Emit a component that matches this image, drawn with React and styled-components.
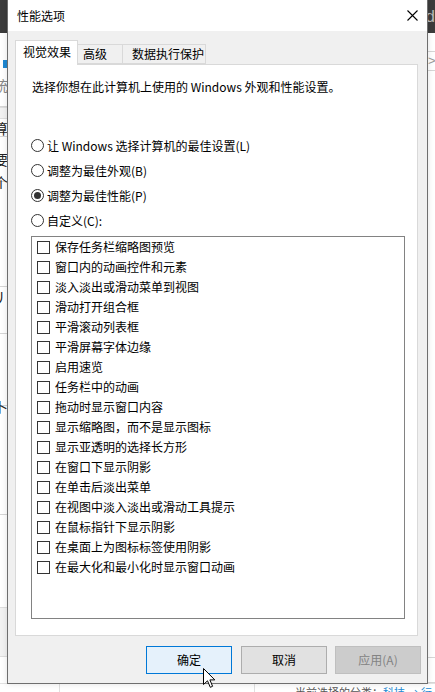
import React from "react";
import styled, { createGlobalStyle } from "styled-components";

const GlobalStyle = createGlobalStyle`
  html, body { margin: 0; padding: 0; background: #ffffff; }
  body {
    font-family: "Noto Sans CJK SC", "Noto Sans", "Liberation Sans", sans-serif;
    font-size: 12px;
    color: #000;
  }
  * { box-sizing: border-box; }
`;

const Page = styled.div`
  position: relative;
  width: 435px;
  height: 692px;
  overflow: hidden;
  background: #fff;
`;

/* ---------- background page (mostly hidden behind the dialog) ---------- */
const Backdrop = styled.div`
  display: flex;
  flex-direction: column;
  width: 435px;
  height: 692px;
`;

const TopBar = styled.div`
  flex: none;
  height: 33px;
  background: #3c3c3c;
  display: flex;
  justify-content: flex-end;
  align-items: center;
  color: #b8b8b8;
  font-size: 17px;
  line-height: 20px;
  font-family: "Liberation Sans", sans-serif;
`;

const Middle = styled.div`
  flex: 1;
  display: flex;
  justify-content: space-between;
`;

const SideFrag = styled.div`
  width: 8px;
  display: flex;
  flex-direction: column;
  overflow: hidden;
`;

const BlueMark = styled.div`
  flex: none;
  margin-top: 27px;
  margin-left: 3px;
  width: 5px;
  height: 8px;
  background: #1e88d2;
`;

const FragText = styled.div`
  flex: none;
  margin-top: ${(p) => p.$mt || 0}px;
  margin-left: -6px;
  height: ${(p) => p.$h || 16}px;
  line-height: ${(p) => p.$h || 16}px;
  font-size: 14px;
  color: ${(p) => p.$c || "#222"};
  white-space: nowrap;
  background: ${(p) => p.$bg || "transparent"};
`;

const FragLine = styled.div`
  flex: none;
  margin-top: ${(p) => p.$mt || 0}px;
  height: 1px;
  background: #d6d6d6;
`;

const FragBand = styled.div`
  flex: none;
  margin-top: ${(p) => p.$mt || 0}px;
  height: ${(p) => p.$h}px;
  background: #f2f2f2;
  border-top: 1px solid #dedede;
  border-bottom: 1px solid #dedede;
`;

const Chevron = styled.div`
  flex: none;
  margin-top: 2px;
  height: 14px;
  line-height: 14px;
  font-size: 13px;
  color: #9a9a9a;
  padding-left: 1px;
  font-family: "Liberation Sans", sans-serif;
`;

const BottomBar = styled.div`
  flex: none;
  height: 16px;
  display: flex;
  align-items: flex-end;
  border-top: 1px solid #e2e2e2;
`;

const BottomCell = styled.div`
  flex: none;
  width: ${(p) => p.$w}px;
  height: 100%;
  border-right: 1px solid #e0e0e0;
`;

const BottomText = styled.div`
  flex: none;
  padding-left: 40px;
  font-size: 11px;
  line-height: 14px;
  color: #555;
  white-space: nowrap;
  span { color: #1a8ad4; }
`;

/* ---------- dialog ---------- */
const Dialog = styled.div`
  position: absolute;
  left: 7px;
  top: -1px;
  width: 421px;
  height: 685px;
  border: 1px solid #6e6e6e;
  background: #f0f0f0;
  display: flex;
  flex-direction: column;
  box-shadow: 0 0 6px rgba(0, 0, 0, 0.12);
`;

const TitleBar = styled.div`
  height: 31px;
  background: #fff;
  display: flex;
  align-items: center;
  justify-content: space-between;
  padding: 0 9px 0 9px;
`;

const Title = styled.div`
  font-size: 12px;
  line-height: 16px;
`;

const CloseBtn = styled.div`
  width: 12px;
  height: 12px;
  display: flex;
  align-items: center;
  justify-content: center;
`;

const Body = styled.div`
  padding: 9px 9px 0 7px;
  display: flex;
  flex-direction: column;
`;

const TabStrip = styled.div`
  height: 24px;
  display: flex;
  align-items: flex-end;
`;

const Tab = styled.div`
  position: relative;
  z-index: ${(p) => (p.$active ? 2 : 1)};
  width: ${(p) => p.$w}px;
  height: ${(p) => (p.$active ? 25 : 20)}px;
  margin-bottom: ${(p) => (p.$active ? -1 : 0)}px;
  margin-left: ${(p) => (p.$first ? 0 : -1)}px;
  background: ${(p) => (p.$active ? "#fff" : "#f0f0f0")};
  border: 1px solid #d9d9d9;
  border-bottom: ${(p) => (p.$active ? "none" : "1px solid #d9d9d9")};
  padding-left: ${(p) => p.$pl}px;
  padding-top: ${(p) => (p.$active ? 3 : 1)}px;
  line-height: 16px;
  font-size: 12px;
  white-space: nowrap;
`;

const Panel = styled.div`
  position: relative;
  z-index: 1;
  height: 572px;
  background: #fff;
  border: 1px solid #d9d9d9;
  padding: 14px 12px 0 16px;
  display: flex;
  flex-direction: column;
`;

const Desc = styled.div`
  line-height: 16px;
  white-space: nowrap;
`;

const RadioGroup = styled.div`
  margin-top: 38px;
  margin-left: -1px;
  display: flex;
  flex-direction: column;
`;

const RadioRow = styled.div`
  height: 25px;
  display: flex;
  align-items: center;
  gap: 3px;
  white-space: nowrap;
`;

const RadioCircle = styled.span`
  width: 13px;
  height: 13px;
  border-radius: 50%;
  border: 1px solid #333;
  background: #fff;
  display: flex;
  align-items: center;
  justify-content: center;
  flex: none;
  &::after {
    content: "";
    display: ${(p) => (p.$checked ? "block" : "none")};
    width: 7px;
    height: 7px;
    border-radius: 50%;
    background: #333;
  }
`;

const Label = styled.span`
  line-height: 16px;
`;

const ListBox = styled.div`
  margin-top: 3px;
  margin-left: -1px;
  height: 383px;
  border: 1px solid #828282;
  background: #fff;
  padding: 0 0 0 5px;
  display: flex;
  flex-direction: column;
`;

const CheckRow = styled.div`
  height: 20px;
  display: flex;
  align-items: center;
  gap: 5px;
  white-space: nowrap;
`;

const CheckBox = styled.span`
  width: 13px;
  height: 13px;
  border: 1px solid #333;
  background: #fff;
  flex: none;
`;

const Footer = styled.div`
  margin-top: 10px;
  margin-right: -3px;
  display: flex;
  justify-content: flex-end;
  gap: 9px;
`;

const Button = styled.div`
  width: 86px;
  height: 28px;
  display: flex;
  align-items: center;
  justify-content: center;
  font-size: 12px;
  line-height: 16px;
  border: 1px solid
    ${(p) =>
      p.$variant === "primary" ? "#0078d7" : p.$variant === "disabled" ? "#bfbfbf" : "#adadad"};
  background: ${(p) =>
    p.$variant === "primary" ? "#e5f1fb" : p.$variant === "disabled" ? "#cccccc" : "#e1e1e1"};
  color: ${(p) => (p.$variant === "disabled" ? "#838383" : "#000")};
  margin-left: ${(p) => p.$ml || 0}px;
`;

const Cursor = styled.svg`
  position: absolute;
  left: 203px;
  top: 668px;
  z-index: 10;
`;

const radios = [
  { label: "让 Windows 选择计算机的最佳设置(L)", checked: false },
  { label: "调整为最佳外观(B)", checked: false },
  { label: "调整为最佳性能(P)", checked: true },
  { label: "自定义(C):", checked: false },
];

const options = [
  "保存任务栏缩略图预览",
  "窗口内的动画控件和元素",
  "淡入淡出或滑动菜单到视图",
  "滑动打开组合框",
  "平滑滚动列表框",
  "平滑屏幕字体边缘",
  "启用速览",
  "任务栏中的动画",
  "拖动时显示窗口内容",
  "显示缩略图，而不是显示图标",
  "显示亚透明的选择长方形",
  "在窗口下显示阴影",
  "在单击后淡出菜单",
  "在视图中淡入淡出或滑动工具提示",
  "在鼠标指针下显示阴影",
  "在桌面上为图标标签使用阴影",
  "在最大化和最小化时显示窗口动画",
];

const tabs = [
  { label: "视觉效果", w: 63, pl: 7, active: true },
  { label: "高级", w: 46, pl: 5 },
  { label: "数据执行保护", w: 84, pl: 9 },
];

export default function App() {
  return (
    <>
      <GlobalStyle />
      <Page>
        <Backdrop>
          <TopBar>d</TopBar>
          <Middle>
            <SideFrag>
              <BlueMark />
              <FragText $mt={9} $c="#888">统</FragText>
              <FragLine $mt={13} />
              <FragBand $mt={0} $h={12} />
              <FragText $mt={1}>算</FragText>
              <FragLine $mt={0} />
              <FragText $mt={12} $h={20}>要</FragText>
              <FragLine $mt={12} />
              <FragText $mt={-8}>个</FragText>
              <FragLine $mt={96} />
              <FragText $mt={4} $h={12}>丿</FragText>
              <FragLine $mt={30} />
              <FragLine $mt={71} />
              <FragText $mt={-8}>卜</FragText>
              <FragLine $mt={100} />
              <FragBand $mt={92} $h={50} />
            </SideFrag>
            <SideFrag>
              <FragLine $mt={18} />
              <Chevron>&gt;</Chevron>
              <FragLine $mt={2} />
              <FragLine $mt={586} />
              <FragLine $mt={24} />
            </SideFrag>
          </Middle>
          <BottomBar>
            <BottomCell $w={60} />
            <BottomCell $w={195} />
            <BottomText>
              当前选择的分类：<span>科技 → 行</span>
            </BottomText>
          </BottomBar>
        </Backdrop>

        <Dialog>
          <TitleBar>
            <Title>性能选项</Title>
            <CloseBtn>
              <svg width="11" height="11" viewBox="0 0 11 11">
                <path d="M0.5 0.5 L10.5 10.5 M10.5 0.5 L0.5 10.5" stroke="#000" strokeWidth="1.1" fill="none" />
              </svg>
            </CloseBtn>
          </TitleBar>
          <Body>
            <TabStrip>
              {tabs.map((t, i) => (
                <Tab key={t.label} $w={t.w} $pl={t.pl} $active={t.active} $first={i === 0}>
                  {t.label}
                </Tab>
              ))}
            </TabStrip>
            <Panel>
              <Desc>选择你想在此计算机上使用的 Windows 外观和性能设置。</Desc>
              <RadioGroup>
                {radios.map((r) => (
                  <RadioRow key={r.label}>
                    <RadioCircle $checked={r.checked} />
                    <Label>{r.label}</Label>
                  </RadioRow>
                ))}
              </RadioGroup>
              <ListBox>
                {options.map((o) => (
                  <CheckRow key={o}>
                    <CheckBox />
                    <Label>{o}</Label>
                  </CheckRow>
                ))}
              </ListBox>
            </Panel>
            <Footer>
              <Button $variant="primary">确定</Button>
              <Button>取消</Button>
              <Button $variant="disabled" $ml={-1}>应用(A)</Button>
            </Footer>
          </Body>
        </Dialog>

        <Cursor width="13" height="21" viewBox="0 0 13 21">
          <path
            d="M0.5 0.5 L0.5 16.5 L4.5 12.8 L7.3 19.3 L9.6 18.3 L6.9 11.9 L11.8 11.9 Z"
            fill="#fff"
            stroke="#000"
            strokeWidth="1"
            strokeLinejoin="miter"
          />
        </Cursor>
      </Page>
    </>
  );
}
